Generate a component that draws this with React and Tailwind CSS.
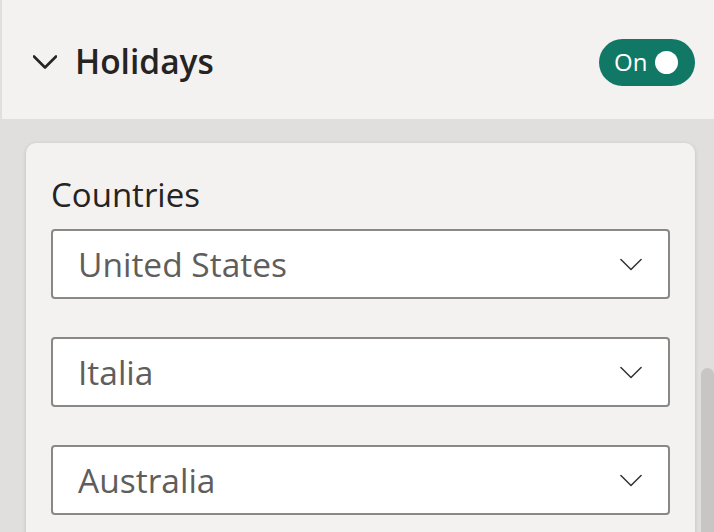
import React from "react";

function Chevron({ className, strokeWidth = 2 }) {
  return (
    <svg className={className} viewBox="0 0 24 14" fill="none" stroke="currentColor" strokeWidth={strokeWidth} strokeLinecap="round" strokeLinejoin="round">
      <path d="M1 1.5 L12 12.5 L23 1.5" />
    </svg>
  );
}

function Dropdown({ label }) {
  return (
    <div className="h-[70px] w-full rounded-[4px] border-2 border-[#8a8886] bg-white flex items-center justify-between pl-[25px] pr-[26px]">
      <span className="text-[33.5px] leading-none text-[#605e5c] mt-[2px]">{label}</span>
      <Chevron className="w-[22px] h-[13px] text-[#323130]" strokeWidth={1.6} />
    </div>
  );
}

export default function App() {
  return (
    <div className="w-[714px] h-[532px] overflow-hidden bg-[#e1dfdd] relative" style={{ fontFamily: '"Open Sans", "Noto Sans", sans-serif' }}>
      <div className="ml-[2px] h-[119px] bg-[#f3f2f1] flex items-center justify-between pl-[31px] pr-[19px]">
        <div className="flex items-center gap-[18px] mt-[4px]">
          <Chevron className="w-[24px] h-[14px] text-[#252423]" strokeWidth={2.6} />
          <span className="text-[33.5px] font-semibold text-[#252423] leading-none">Holidays</span>
        </div>
        <div className="w-[96px] h-[47px] rounded-full bg-[#117865] flex items-center pl-[15px] pr-[14px] gap-[8px] mt-[5px]">
          <span className="text-[24px] leading-none text-white">On</span>
          <span className="w-[23px] h-[23px] rounded-full bg-white" />
        </div>
      </div>
      <div className="pt-[24px] pl-[26px] pr-[19px]">
        <div className="rounded-[10px] bg-[#f3f2f1] shadow-[0_1px_4px_rgba(0,0,0,0.14)] px-[25px] pt-[35px] pb-[40px]">
          <div className="text-[33px] leading-none text-[#252423] h-[51px]">Countries</div>
          <div className="flex flex-col gap-[38px]">
            <Dropdown label="United States" />
            <Dropdown label="Italia" />
            <Dropdown label="Australia" />
          </div>
        </div>
      </div>
      <div className="absolute right-0 top-[368px] w-[13px] h-[200px] rounded-t-[7px] bg-[#c8c6c4]" />
    </div>
  );
}
